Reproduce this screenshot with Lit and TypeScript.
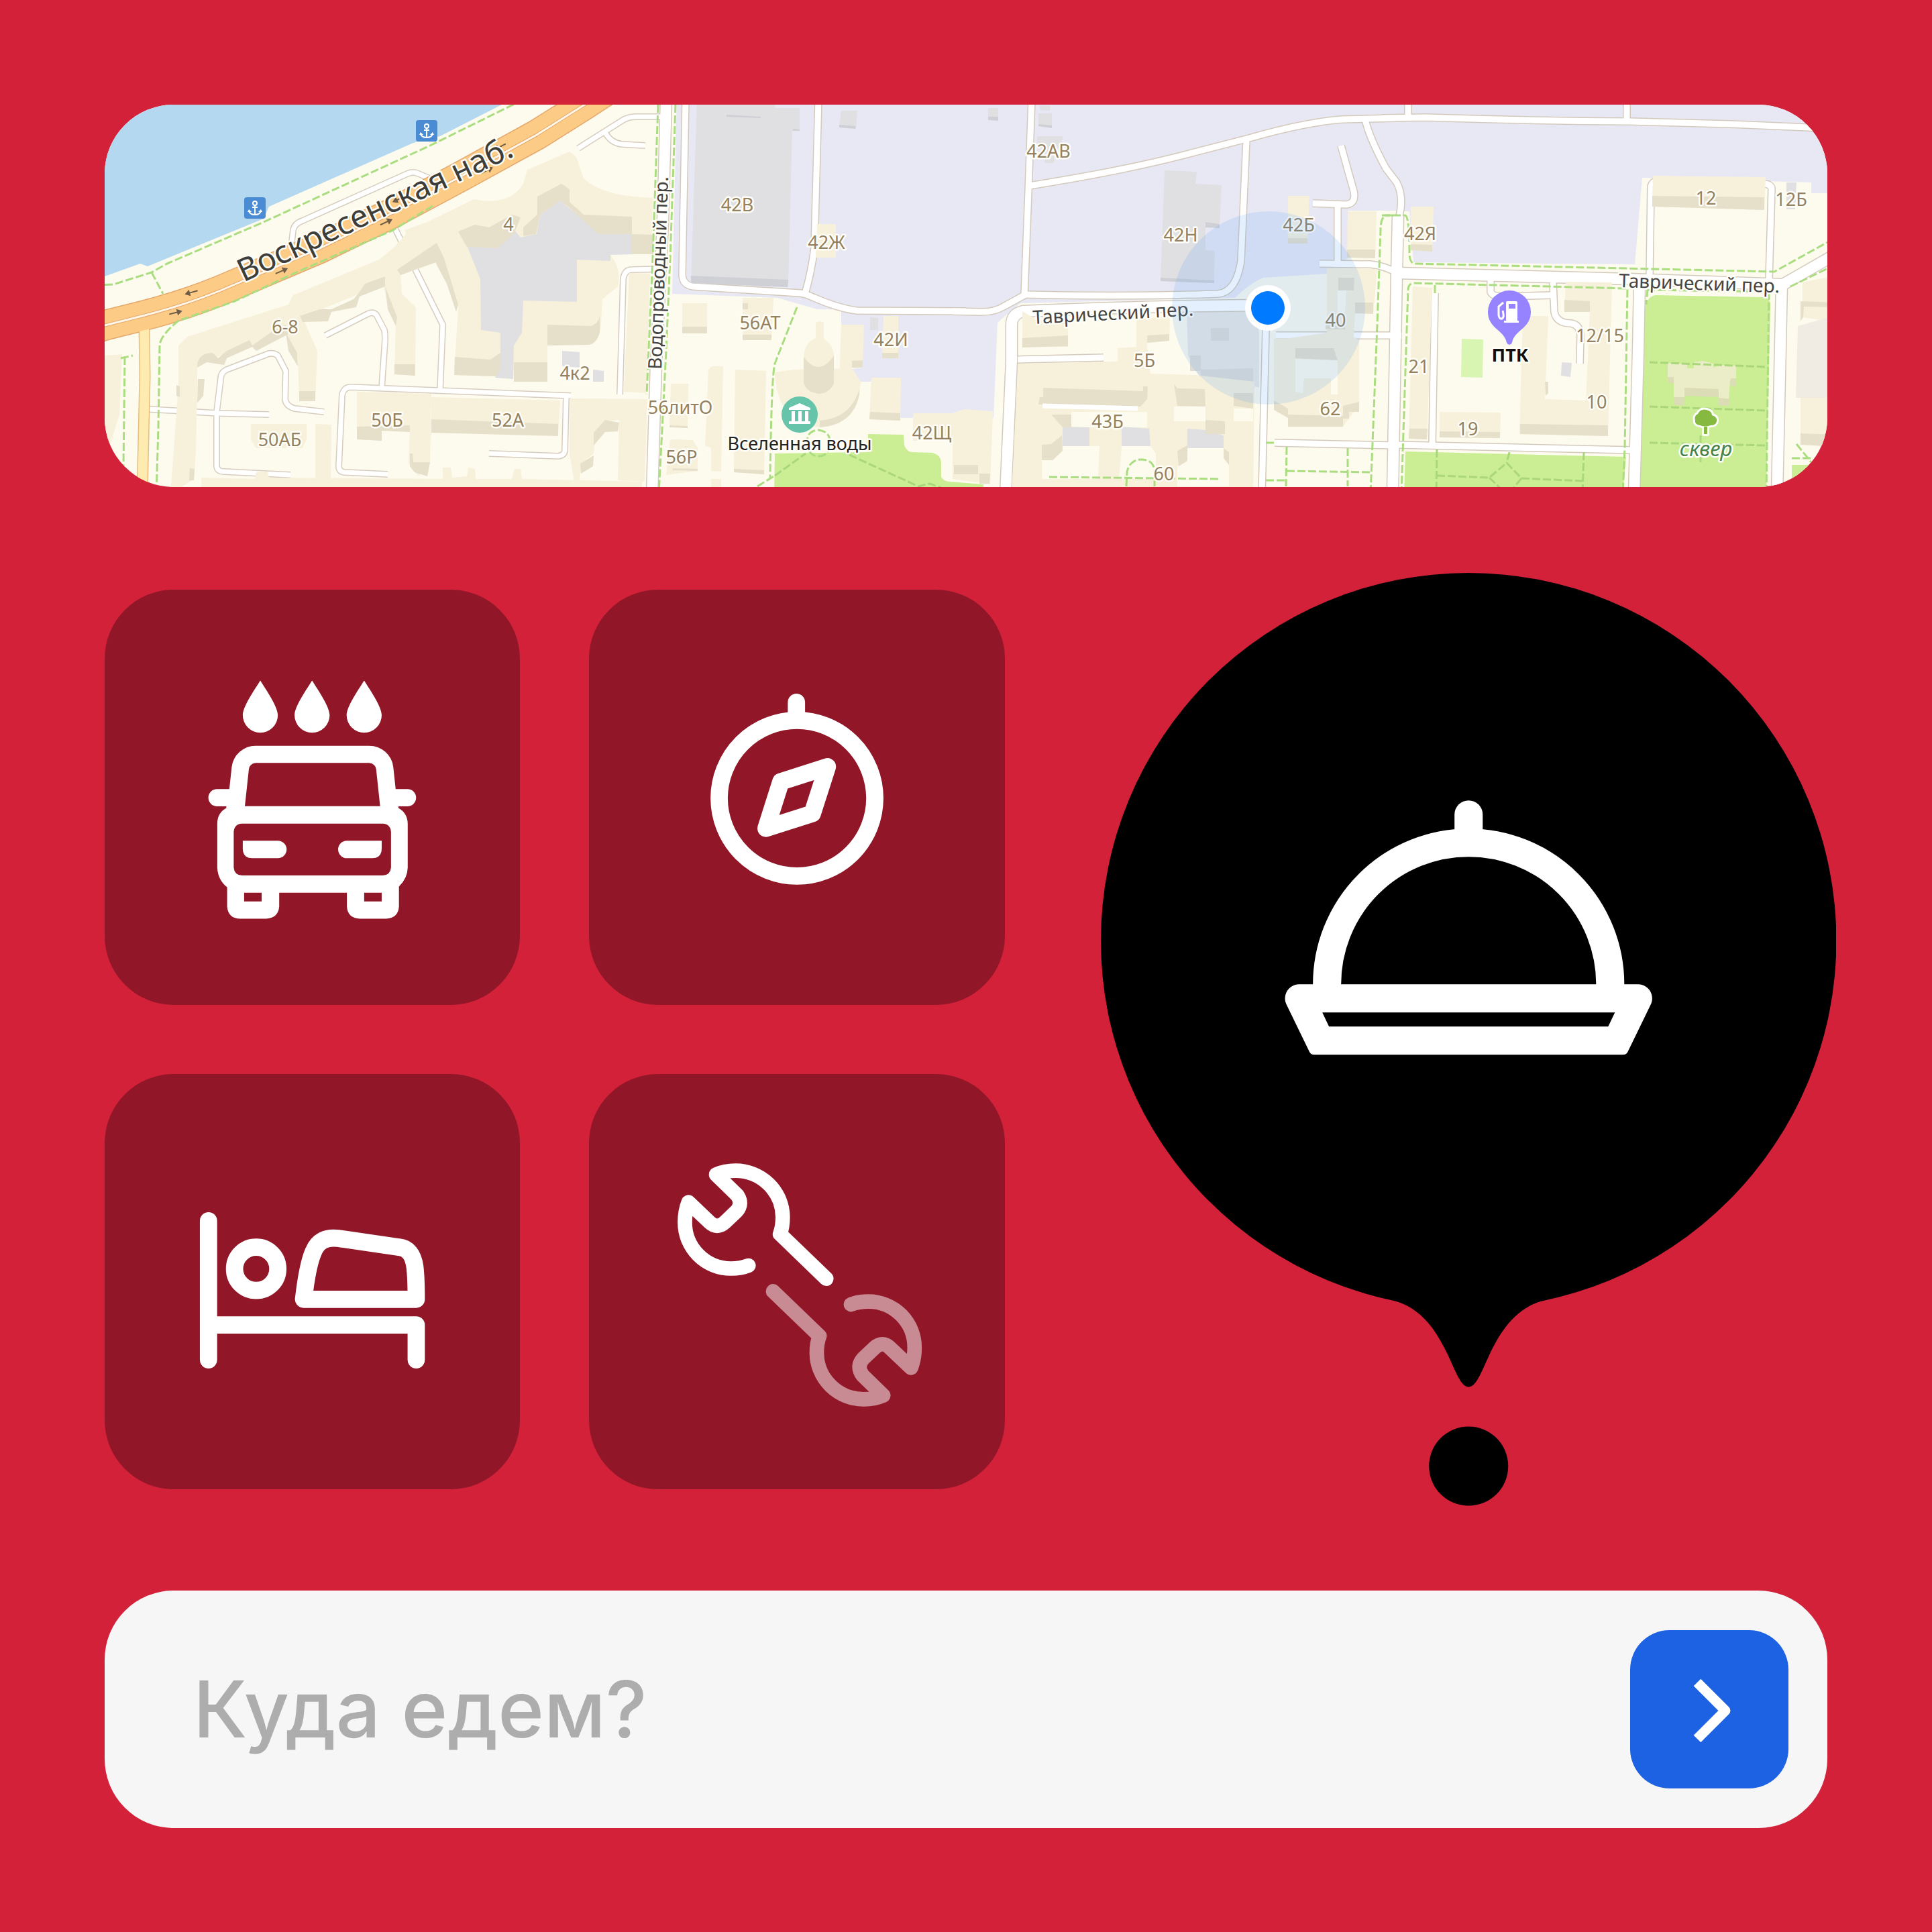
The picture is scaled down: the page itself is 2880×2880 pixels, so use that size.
import { LitElement, html, svg, css } from "lit";
import { customElement, property } from "lit/decorators.js";

/* ---------- map data ---------- */

type Plot = (d: string) => string;

/** The map is digitised in four sheets; each converts its own grid to map units. */
const sheet = (left: number, span: number) => {
  const x = (v: number) => Math.round((v * span) / 1568 + left);
  const y = (v: number) => Math.round((v * 600) / 1568 - 16);
  const plot: Plot = (d) =>
    d.replace(/(-?\d+) (-?\d+)/g, (_, a, b) => `${x(+a)} ${y(+b)}`);
  return { x, y, plot };
};

const s1 = sheet(-16, 660);
const s2 = sheet(624, 660);
const s3 = sheet(1264, 660);
const s4 = sheet(1904, 680);
const a = s1.plot;
const b = s2.plot;
const c = s3.plot;
const d = s4.plot;

const WATER = a("M0 0 L1560 0 L1445 42 L1225 165 L1130 190 L620 440 L600 485 L190 672 L165 660 L38 712 L0 725 Z");

const INDUSTRY =
  b("M545 0 L527 778 L900 795 L1040 838 L1125 838 L1125 900 L1205 1065 L1165 1072 L1195 1120 L1232 1122 L1338 1262 L1568 1262") +
  c(" L145 1262 L158 890 L240 815 L1000 795 Q1050 740 1100 715 L1325 700 L1400 640 L1400 455 L1530 455") +
  d(" L95 458 L108 655 L870 665 L895 327 L1475 345 L1475 387 L1568 387 L1568 0 Z");

const PARKS = [
  d("M903 835 Q910 790 940 785 L1310 793 Q1335 795 1336 820 L1322 1560 L888 1560 Z"),
  d("M80 1392 L840 1414 L828 1560 L75 1560 Z"),
  d("M1408 1445 L1568 1445 L1568 1560 L1408 1560 Z"),
  b("M888 1560 L890 1400 L1220 1395 L1220 1325 L1348 1328 L1350 1370 Q1360 1395 1380 1395 L1450 1398 Q1480 1405 1480 1440 L1480 1490 Q1485 1508 1510 1510 L1630 1522 L1630 1560 Z"),
];

const WIDE_ROADS = [
  b("M505 20 L495 500 L470 1050 L455 1560"),
  c("M1110 822 Q700 826 250 846 Q208 856 208 900 L208 1040 L188 1560"),
  d("M55 475 L50 700 L38 1560"),
  d("M50 698 L850 722 L1380 742 L1568 620"),
  d("M885 735 L880 1000 L868 1560"),
  d("M1375 740 L1368 1100 L1358 1560"),
];

const ROADS = [
  b("M575 20 L562 700 Q562 745 600 750 L980 775 Q1000 778 1030 795 Q1120 835 1180 843 L1568 848"),
  b("M1045 20 L1030 600 Q1020 700 997 778"),
  c("M0 848 L100 850 Q150 850 180 828 L254 783"),
  c("M280 20 L268 380 L255 783"),
  c("M270 357 Q600 300 830 235 L1050 172 Q1250 110 1380 100 L1568 95"),
  c("M254 782 Q600 792 940 780 Q1005 770 1022 650 L1040 180"),
  c("M1110 850 L1110 920 L1095 1560"),
  c("M1460 100 Q1475 170 1535 290") + d(" L50 345 Q75 400 60 475"),
  d("M0 95 L150 92 Q500 105 850 108 L1200 118 L1568 136"),
  d("M90 20 L90 92"),
  d("M842 20 L842 106"),
  c("M1363 435 L1363 660"),
  c("M1375 200 L1420 380 Q1430 425 1395 432 L1275 427"),
  c("M1300 662 L1480 665 Q1530 670 1580 700"),
  c("M1145 940 L1590 942"),
  c("M1140 1360 L1568 1370"),
  d("M50 1366 L860 1388"),
  d("M373 725 L373 770 Q380 790 410 790 L590 785"),
  d("M588 735 L592 850 Q600 895 650 895 Q680 900 682 940 L680 1050"),
  d("M183 775 L172 1366"),
  d("M920 715 L925 360 Q930 340 950 340 L1310 350 Q1340 350 1340 370 L1330 725"),
  c("M230 1034 L535 1026"),
];

const LANES = [
  a("M700 575 L705 530 Q710 505 740 495 L1110 310 Q1130 300 1150 310 L1190 328"),
  a("M820 940 L970 858 Q995 845 1005 870 L1028 920 Q1032 930 1031 960 L1020 1145"),
  a("M1062 515 L1235 900 L1225 1155"),
  a("M198 1228 L438 1243 L620 1250"),
  a("M815 1240 L710 1225 Q680 1215 678 1190 L680 1080 L650 1020 Q640 1008 620 1012 L470 1075 Q450 1085 449 1110 L435 1240 L434 1450 Q436 1470 460 1471 L697 1485"),
  a("M1040 1482 L885 1475 Q868 1470 868 1450 L880 1170 Q885 1143 910 1143 L1690 1176"),
  a("M1400 1402 L1645 1410 Q1666 1408 1667 1390 L1673 1180"),
  b("M195 212 L350 105 Q370 90 400 90 L500 88"),
  b("M290 150 Q310 190 350 195 L432 202"),
  b("M342 1172 L355 720 Q358 685 385 685 L480 683"),
];

const BUILDINGS = [
  a("M300 980 L330 945 L690 820 L705 785 L1010 645 L1060 600 L1110 540 L1220 590 L1245 640 L1215 655 L1085 705 L1090 780 L1140 830 L1138 1098 L1065 1092 L1070 880 L1030 770 L1025 740 L740 870 L790 1000 L785 1198 L728 1195 L722 1020 L680 940 L450 1020 L365 1060 L365 1150 L360 1400 L355 1500 L272 1560 L300 1140 Z"),
  a("M1100 530 L1180 500 L1345 410 Q1470 440 1520 350 L1535 295 L1685 225 L1708 245 L1735 330 Q1800 400 1980 405 L1975 620 L1830 628 Q1870 680 1855 750 L1800 800 L1795 900 Q1790 970 1740 975 L1607 980 L1607 1120 L1487 1120 L1485 1070 L1425 1100 L1275 1095 L1290 830 L1220 590 L1140 610 Z"),
  a("M38 1020 L100 1015 L90 1250 L60 1360 L20 1350 Z"),
  a("M932 1160 L1195 1168 L1190 1440 L1150 1490 L1115 1440 L1120 1310 L1020 1305 L1020 1350 L932 1345 Z"),
  a("M1195 1180 L1650 1195 L1645 1330 L1195 1320 Z"),
  a("M557 1285 L753 1285 L753 1345 L740 1380 L575 1380 L557 1345 Z"),
  a("M785 1285 L840 1288 L838 1500 L785 1500 Z"),
  a("M380 1495 L570 1500 L575 1470 L615 1470 L620 1495 L1235 1500 L1235 1455 L1265 1455 L1268 1495 L1320 1490 L1325 1455 L1350 1460 L1352 1500 L1480 1500 L1490 1460 L1510 1460 L1515 1500 L1940 1510 L1940 1560 L380 1560 Z"),
  b("M375 698 L450 700 L435 1165 L357 1160 Z"),
  b("M165 1187 L440 1190 L430 1510 L335 1505 L340 1270 L290 1275 L255 1330 L250 1400 L205 1440 L200 1510 L180 1510 L165 1400 Z"),
  b("M562 815 L650 815 L650 932 L562 932 Z"),
  b("M778 795 L885 795 L878 960 L778 960 Z"),
  b("M668 1060 L708 1062 L700 1470 L665 1468 L665 1380 L645 1370 L655 1075 Z"),
  b("M750 1075 L860 1080 L853 1482 L745 1475 Z"),
  b("M522 1130 L585 1130 L582 1302 L518 1295 Z"),
  b("M520 1345 L600 1348 L618 1380 L618 1468 L505 1485 Z"),
  b("M665 1500 L702 1500 L700 1535 L665 1535 Z"),
  b("M890 1085 L960 1075 L1165 1070 L1195 1120 L1190 1170 Q1160 1290 1050 1298 Q900 1290 890 1085 Z"),
  b("M1125 900 L1208 900 L1202 1062 L1165 1065 L1165 1120 L1120 1120 Z"),
  b("M1275 865 L1327 865 L1327 1030 L1270 1030 Z"),
  b("M1232 1105 L1338 1105 L1336 1272 L1225 1268 Z"),
  b("M1380 1245 L1535 1245 L1560 1262 L1560 1350 L1380 1350 Z"),
  b("M1525 1390 L1590 1390 L1590 1483 L1525 1483 Z"),
  b("M1040 508 L1107 508 L1107 638 L1035 638 Z"),
  c("M248 848 L300 880 L408 880 L408 985 L248 985 Z"),
  c("M650 880 L770 865 L768 962 L690 968 L690 1000 L585 1060 L585 990 L650 985 Z"),
  c("M232 1050 L590 1044 L590 1000 L690 990 L700 1090 L860 1095 L1068 1120 L1065 1560 L210 1560 Z"),
  c("M0 1245 L40 1228 L142 1235 L132 1520 L0 1500 Z"),
  c("M1187 398 L1263 398 L1257 583 L1187 583 Z"),
  c("M1400 458 L1502 458 L1497 640 L1398 638 Z"),
  c("M1325 680 L1505 682 L1490 855 L1425 855 L1420 945 L1440 960 L1440 1205 L1420 1240 L1383 1295 L1187 1295 L1187 1260 L1137 1220 L1137 955 L1195 950 L1325 930 Z"),
  d("M98 440 L177 440 L173 612 L98 610 Z"),
  d("M107 750 L172 755 L155 1345 L93 1343 Z"),
  d("M198 1238 L407 1242 L406 1340 L198 1338 Z"),
  d("M632 733 L790 735 L778 1333 L473 1325 L485 865 L572 865 L560 1190 L700 1195 L715 850 L628 850 Z"),
  d("M932 318 L1318 325 L1315 452 L930 440 Z"),
  d("M1445 735 L1568 705 L1568 890 L1445 870 Z"),
  d("M1440 1185 L1568 1185 L1568 1375 L1440 1365 Z"),
];

const SHADOWS = [
  a("M1065 1052 L1138 1052 L1138 1098 L1065 1092 Z"),
  a("M728 1158 L785 1158 L785 1198 L728 1198 Z"),
  a("M730 865 L800 840 L840 840 L920 800 L940 770 L960 740 L1030 710 L1030 750 L940 790 L930 830 L840 850 L830 885 L740 888 Z"),
  a("M365 1050 Q375 1010 420 1010 L440 1030 L470 1000 L550 960 L560 980 L640 920 L680 900 L690 935 L575 1000 L560 985 L470 1030 L460 1055 L400 1045 L365 1065 Z"),
  a("M680 930 L720 1010 L722 1060 L690 1000 Z"),
  a("M1030 750 L1075 870 L1070 905 L1040 840 Z"),
  a("M368 1110 L392 1110 L388 1175 L365 1205 Z"),
  a("M292 1135 L303 1140 L303 1180 L292 1175 Z"),
  a("M340 1458 L356 1460 L354 1505 L338 1505 Z"),
  a("M1075 685 L1215 580 L1240 640 L1290 820 L1283 850 L1250 740 L1210 655 L1085 705 Z"),
  a("M1290 535 L1350 510 L1400 520 L1480 470 L1510 480 L1490 540 L1430 600 L1320 595 Z"),
  a("M1278 1025 L1405 1035 L1440 1010 L1440 1065 L1425 1100 L1275 1095 Z"),
  a("M1487 1045 L1607 1045 L1607 1120 L1487 1120 Z"),
  a("M932 1295 L1120 1290 L1120 1318 L1020 1312 L1020 1352 L932 1346 Z"),
  a("M1118 1400 L1128 1400 L1130 1435 L1190 1435 L1180 1490 L1135 1475 L1118 1450 Z"),
  a("M1195 1268 L1645 1287 L1645 1332 L1195 1320 Z"),
  b("M50 400 L135 350 L165 370 L165 420 L215 470 L385 478 L385 545 L265 545 L160 440 L130 415 L60 470 L45 545 L0 555 L0 520 L50 470 Z"),
  b("M385 547 L460 550 L460 625 L385 625 Z"),
  b("M85 900 L240 905 Q270 890 272 860 L272 930 Q260 975 230 978 L85 980 Z"),
  b("M250 1320 L290 1270 L340 1280 L335 1315 L290 1318 L250 1370 Z"),
  b("M202 1440 L250 1408 L248 1450 L205 1480 Z"),
  b("M562 906 L650 906 L650 932 L562 932 Z"),
  b("M778 938 L878 938 L878 960 L778 960 Z"),
  b("M778 815 L796 815 L796 840 L778 840 Z"),
  b("M745 1460 L853 1465 L853 1482 L745 1475 Z"),
  b("M518 1290 L582 1293 L582 1302 L518 1299 Z"),
  b("M530 1458 L618 1460 L618 1468 L530 1466 Z"),
  b("M1190 1150 Q1160 1265 1050 1272 L1050 1298 Q1170 1290 1190 1170 Z"),
  b("M1165 1040 L1202 1038 L1202 1065 L1165 1065 Z"),
  b("M993 1020 Q1045 1105 1100 1020 L1100 1130 Q1080 1168 1045 1168 Q1000 1160 993 1125 Z"),
  b("M1270 1010 L1327 1010 L1327 1030 L1270 1030 Z"),
  b("M1228 1240 L1336 1245 L1336 1272 L1226 1268 Z"),
  b("M1525 1450 L1590 1450 L1590 1483 L1525 1483 Z"),
  c("M248 950 L408 942 L408 983 L248 988 Z"),
  c("M690 942 L768 935 L768 962 L690 970 Z"),
  c("M320 1145 L675 1158 L675 1140 L692 1140 L690 1190 L665 1218 L305 1210 L308 1180 L320 1180 Z"),
  c("M785 1130 L795 1148 L893 1150 L895 1218 L795 1215 Z"),
  c("M995 1165 L1065 1165 L1065 1225 L995 1215 Z"),
  c("M315 1368 L350 1365 L388 1330 L390 1390 L355 1428 L315 1428 Z"),
  c("M350 1250 L420 1250 L420 1298 L390 1298 Z"),
  c("M895 1270 L965 1275 L965 1325 L895 1325 Z"),
  c("M795 1390 L832 1370 L832 1430 L800 1450 Z"),
  c("M960 1380 L978 1395 L978 1445 L960 1420 Z"),
  c("M5 1445 L90 1445 L90 1482 L5 1482 Z"),
  c("M95 1480 L132 1480 L130 1518 L95 1518 Z"),
  c("M1187 563 L1257 563 L1257 583 L1187 583 Z"),
  c("M1398 605 L1497 607 L1497 640 L1398 638 Z"),
  c("M1213 990 L1350 990 L1363 1038 L1213 1030 Z"),
  c("M1187 1250 L1383 1255 L1383 1295 L1187 1295 Z"),
  c("M1137 1195 L1187 1225 L1187 1262 L1137 1230 Z"),
  c("M1383 1215 L1440 1200 L1440 1240 L1405 1240 L1405 1265 L1383 1265 Z"),
  c("M1365 715 L1422 715 L1420 765 L1365 765 Z"),
  c("M1425 812 L1490 814 L1490 857 L1425 855 Z"),
  c("M1322 895 L1390 895 L1390 918 L1322 918 Z"),
  d("M98 585 L174 587 L173 614 L98 610 Z"),
  d("M94 1303 L157 1305 L155 1345 L93 1343 Z"),
  d("M198 1315 L406 1318 L406 1340 L198 1338 Z"),
  d("M628 803 L715 808 L714 850 L628 850 Z"),
  d("M475 1285 L777 1292 L776 1333 L474 1325 Z"),
  d("M560 1120 L572 1120 L572 1165 L562 1175 Z"),
  d("M930 396 L1315 402 L1315 452 L930 440 Z"),
  d("M1440 808 L1568 812 L1568 832 L1450 828 L1448 870 L1440 885 Z"),
  d("M1440 1322 L1568 1328 L1568 1375 L1440 1367 Z"),
];

const COURTYARDS = [
  c("M315 1428 L355 1428 L390 1390 L390 1372 L520 1372 L515 1500 L315 1500 Z"),
  c("M598 1372 L700 1372 L720 1400 L720 1500 L590 1500 Z"),
  c("M832 1380 L960 1380 L978 1450 L978 1530 L795 1530 L795 1450 L832 1430 Z"),
  c("M420 1238 L690 1238 L690 1300 L420 1298 Z"),
  c("M785 1218 L895 1218 L895 1275 L785 1275 Z"),
  c("M995 1225 L1065 1225 L1065 1275 L995 1275 Z"),
  c("M1213 1032 L1363 1038 L1363 1170 L1340 1170 L1340 1108 L1245 1108 L1240 1165 L1213 1160 Z"),
  c("M1363 765 L1395 765 L1390 850 L1363 850 Z"),
];

const PALE_BLOCKS = [
  c("M830 850 L1068 850 L1085 930 L1085 1145 L1000 1120 L880 1110 L835 1020 Z"),
];

const PALE_SHADOWS = [
  c("M880 1075 L1065 1068 L1065 1120 L880 1105 Z"),
  c("M915 912 L978 912 L978 962 L915 962 Z"),
  c("M840 1018 L878 1020 L878 1080 L840 1080 Z"),
];

const GREY_BLOCKS = [
  a("M1320 590 L1420 600 L1490 530 L1510 560 L1568 545 L1580 470 L1650 415 L1735 490 L1790 545 L1905 545 L1905 625 L1830 628 L1830 650 L1710 645 L1710 810 L1520 805 L1515 930 L1487 980 L1485 1110 L1420 1105 L1440 1060 L1440 930 L1370 920 L1368 720 Z"),
  b("M615 20 L890 20 L890 55 L978 55 L978 145 L952 145 L938 750 L595 738 Z"),
  b("M1125 65 L1183 65 L1178 133 L1120 128 Z"),
  b("M138 1000 L200 1005 L200 1065 L138 1060 Z"),
  b("M247 1075 L284 1078 L284 1122 L247 1120 Z"),
  b("M1228 870 L1257 872 L1257 920 L1228 920 Z"),
  c("M750 298 L865 303 L860 350 L952 355 L945 520 L895 520 L895 610 L928 612 L926 738 L737 730 Z"),
  c("M303 75 L352 75 L352 130 L303 125 Z"),
  c("M300 165 L390 165 L388 210 L358 215 L358 270 L326 270 L326 215 L300 210 Z"),
  c("M125 55 L162 55 L162 102 L125 102 Z"),
  c("M308 45 L345 48 L345 66 L308 62 Z"),
  c("M390 1297 L485 1300 L485 1372 L390 1372 Z"),
  c("M598 1297 L695 1305 L700 1372 L598 1372 Z"),
  c("M832 1305 L895 1308 L960 1330 L960 1380 L832 1380 Z"),
  d("M1390 345 L1425 345 L1420 450 L1390 450 Z"),
  d("M617 1045 L652 1047 L648 1102 L615 1098 Z"),
];

const GREY_SHADOWS = [
  b("M595 708 L938 724 L935 752 L595 738 Z"),
  b("M720 82 L840 90 L840 95 L720 88 Z"),
  b("M955 136 L978 138 L978 145 L955 145 Z"),
  b("M1120 120 L1178 126 L1176 135 L1120 130 Z"),
  c("M737 716 L926 726 L926 738 L737 730 Z"),
  c("M895 500 L945 508 L945 522 L895 520 Z"),
  c("M125 90 L162 90 L162 104 L125 102 Z"),
  c("M303 118 L352 123 L352 132 L303 126 Z"),
];

const PATHS = [
  a("M0 745 L70 742 L205 695 L260 660 L600 500 L1190 200 L1500 35"),
  a("M205 695 L245 780"),
  a("M1200 437 L1060 530 L700 702 L500 808 L300 882 Q235 940 232 980 L228 1300 L222 1560"),
  a("M110 1025 L105 1450"),
  a("M95 1030 L138 1020"),
  b("M478 42 L458 640 L437 1170"),
  b("M540 42 L520 640 L505 1000 L480 1560"),
  b("M970 832 L890 1050 Q880 1100 874 1500"),
  b("M830 1530 L890 1486"),
  b("M1005 1370 Q1000 1312 1045 1310 Q1080 1315 1085 1345 Q1090 1410 1045 1412 Q1015 1410 1005 1370"),
  c("M342 1492 L950 1500"),
  c("M616 1530 L618 1470 Q630 1425 668 1423 Q710 1425 716 1465 L716 1530"),
  c("M1110 1358 L1140 1358"),
  c("M1110 1506 L1180 1506"),
  c("M1182 1375 L1180 1530"),
  c("M1182 1468 L1485 1473"),
  c("M1400 1380 L1400 1530"),
  c("M1560 473 L1535 473 Q1515 480 1515 530 L1505 900 L1480 1560"),
  d("M0 473 L80 473 Q95 480 94 620 Q95 655 110 660 L1350 693 L1560 560"),
  d("M68 1560 L90 760 Q92 738 110 738 L845 757 L835 1380 L828 1560"),
  d("M183 745 L183 775"),
  d("M912 760 L908 820"),
  d("M1560 665 L1395 755"),
  d("M1330 770 L1322 1560"),
  d("M910 762 L1330 772"),
  d("M1408 1418 L1480 1420"),
  d("M1425 1365 L1475 1435"),
];

const PARK_PATHS = [
  b("M890 1486 L1000 1400"),
  b("M1155 1405 L1400 1530 L1440 1518 L1480 1535"),
  d("M188 1385 L186 1560"),
  d("M695 1395 L690 1560"),
  d("M188 1487 L370 1495 L430 1438 L480 1498 L690 1507"),
  d("M437 1395 L430 1438"),
  d("M370 1495 L415 1545"),
  d("M480 1498 L445 1545"),
  d("M920 1045 L1325 1063"),
  d("M920 1217 L1320 1234"),
  d("M920 1358 L1320 1370"),
  d("M1095 1330 L1095 1435"),
];

type House = [number, number, string];
const houses = (s: typeof s1, list: House[]): House[] =>
  list.map(([x, y, t]) => [s.x(x), s.y(y), t]);

const HOUSES: House[] = [
  ...houses(s1, [
    [1468, 532, "4"],
    [676, 932, "6-8"],
    [658, 1372, "50АБ"],
    [1038, 1297, "50Б"],
    [1467, 1297, "52А"],
  ]),
  ...houses(s2, [
    [758, 458, "42В"],
    [1073, 604, "42Ж"],
    [838, 918, "56АТ"],
    [1303, 983, "42И"],
    [182, 1113, "4к2"],
    [555, 1246, "56литО"],
    [1447, 1347, "42Щ"],
    [560, 1440, "56Р"],
  ]),
  ...houses(s3, [
    [340, 248, "42АВ"],
    [807, 576, "42Н"],
    [1225, 535, "42Б"],
    [1357, 906, "40"],
    [679, 1064, "5Б"],
    [548, 1302, "43Б"],
    [1337, 1253, "62"],
    [749, 1505, "60"],
  ]),
  ...houses(s4, [
    [1113, 430, "12"],
    [1407, 436, "12Б"],
    [132, 570, "42Я"],
    [750, 967, "12/15"],
    [126, 1086, "21"],
    [738, 1225, "10"],
    [294, 1330, "19"],
  ]),
];

/** One-way arrows on the embankment: x, y, angle. */
const ARROWS = [
  [129, 280, 164],
  [106, 310, -14],
  [264, 248, -23],
  [420, 175, -25],
  [438, 141, 155],
  [570, 98, -28],
  [589, 63, 152],
];

const EMBANKMENT = a("M0 915 L38 902 L170 865 Q350 815 500 742 L800 600 L1060 462 L1300 322 L1568 160 L1735 45 L1850 -40");
const YELLOW_STREET = a("M178 905 L181 1100 L172 1560");

@customElement("city-map")
class CityMap extends LitElement {
  static styles = css`
    :host {
      display: block;
      overflow: hidden;
      border-radius: 103px;
      background: #fdfbee;
    }
    svg {
      display: block;
      width: 100%;
      height: auto;
      font-family: "Noto Sans", "Open Sans", sans-serif;
    }
    .water { fill: #b4d8f0; }
    .industry { fill: #e8e8f4; }
    .park { fill: #cbee95; }
    .pitch { fill: #d9f5b2; }
    .block { fill: #f7f0da; }
    .shade { fill: #e6dfca; }
    .pale { fill: #e9e8e4; }
    .pale-shade { fill: #dddcd6; }
    .grey { fill: #e0e0e3; }
    .grey-shade { fill: #cfd0d5; }
    .yard { fill: #fdfbee; }
    .line { fill: none; stroke-linejoin: round; }
    .edge-wide { stroke: #d3cabc; stroke-width: 19px; }
    .face-wide { stroke: #fff; stroke-width: 16px; }
    .edge { stroke: #d3cabc; stroke-width: 12px; }
    .face { stroke: #fff; stroke-width: 9px; }
    .edge-lane { stroke: #d6cdbf; stroke-width: 10px; }
    .face-lane { stroke: #fff; stroke-width: 7px; }
    .quay-edge { stroke: #e5a86c; stroke-width: 46px; }
    .quay { stroke: #fccb86; stroke-width: 43px; }
    .median-edge { stroke: #e5a86c; stroke-width: 5px; }
    .median { stroke: #fff8ea; stroke-width: 3px; }
    .yellow-edge { stroke: #e8bd80; stroke-width: 17px; }
    .yellow { stroke: #feebb0; stroke-width: 14px; }
    .path { stroke: #aadd80; stroke-width: 3px; stroke-dasharray: 12 4; }
    .park-path { stroke: #aad67c; stroke-width: 3px; stroke-dasharray: 12 4; }
    .arrow { fill: none; stroke: #6d5d48; stroke-width: 2px; }
    .arrow-head { fill: #6d5d48; }
    text {
      paint-order: stroke;
      stroke: #fffef8;
      stroke-width: 5px;
      stroke-linejoin: round;
    }
    .house { fill: #93815f; font-size: 27px; text-anchor: middle; }
    .street { fill: #444; font-size: 28px; }
    .quay-name { fill: #3d3d3a; font-size: 47px; }
    .place { fill: #222; font-size: 27px; text-anchor: middle; }
    .fuel-name { fill: #111; font-size: 27px; font-weight: 700; text-anchor: middle; }
    .square-name { fill: #45844a; font-size: 31px; font-style: italic; text-anchor: middle; }
    .tree { fill: #85b940; stroke: #fff; stroke-width: 6px; stroke-linejoin: round; paint-order: stroke; }
  `;

  private lines(list: string[], name: string) {
    return list.map((p) => svg`<path class="line ${name}" d=${p}></path>`);
  }

  private areas(list: string[], name: string) {
    return list.map((p) => svg`<path class=${name} d=${p}></path>`);
  }

  private anchor(x: number, y: number) {
    return svg`<g transform="translate(${x} ${y})">
      <rect width="32" height="32" rx="4" fill="#4a8bd4"></rect>
      <g fill="none" stroke="#fff" stroke-width="2">
        <circle cx="16" cy="9" r="3"></circle>
        <path d="M16 12 V26 M12 15 H20 M7 20 Q8 26 16 26 Q24 26 25 20"></path>
      </g>
      <path fill="#fff" d="M5 22 L7 18 L11 22 Z M27 22 L25 18 L21 22 Z"></path>
    </g>`;
  }

  render() {
    return html`<svg viewBox="0 0 2568 570" role="img" aria-label="Карта">
      <path class="water" d=${WATER}></path>
      <path class="industry" d=${INDUSTRY}></path>
      ${this.areas(PARKS, "park")}
      <path class="pitch" d=${d("M275 955 L348 957 L346 1105 L273 1103 Z")}></path>
      ${this.areas(PALE_BLOCKS, "pale")} ${this.areas(PALE_SHADOWS, "pale-shade")}
      ${this.lines(LANES, "edge-lane")} ${this.lines(ROADS, "edge")}
      ${this.lines(WIDE_ROADS, "edge-wide")} ${this.lines(LANES, "face-lane")}
      ${this.lines(ROADS, "face")} ${this.lines(WIDE_ROADS, "face-wide")}
      ${this.lines([YELLOW_STREET], "yellow-edge")}
      ${this.lines([EMBANKMENT], "quay-edge")}
      ${this.lines([YELLOW_STREET], "yellow")}
      ${this.lines([EMBANKMENT], "quay")}
      ${this.lines([EMBANKMENT], "median-edge")}
      ${this.lines([EMBANKMENT], "median")}
      ${this.areas(BUILDINGS, "block")} ${this.areas(COURTYARDS, "yard")}
      ${this.areas(GREY_BLOCKS, "grey")} ${this.areas(SHADOWS, "shade")}
      ${this.areas(GREY_SHADOWS, "grey-shade")}
      <path class="block" d=${b("M1035 890 L1050 885 L1065 890 L1065 955 Q1100 980 1100 1020 Q1045 1105 993 1025 Q995 970 1035 950 Z")}></path>
      <path fill="#f0ece3" d=${d("M1430 905 L1568 860 L1568 1185 L1422 1185 Z")}></path>
      <path fill="#ebecc8" d=${d("M983 1048 L1050 1052 L1050 1068 L1072 1068 L1072 1045 L1102 1040 L1140 1050 L1140 1065 L1165 1055 L1218 1058 L1217 1110 L1197 1115 L1192 1190 L1157 1185 L1157 1150 L1040 1148 L1040 1185 L1003 1180 L1003 1110 L983 1105 Z")}></path>
      <path fill="#dcdcb6" d=${d("M1040 1144 L1157 1150 L1157 1182 L1040 1175 Z M1003 1180 L1040 1182 L1038 1214 L1003 1210 Z M1157 1185 L1195 1188 L1193 1216 L1157 1213 Z M983 1103 L1003 1103 L1003 1130 L985 1125 Z M1198 1108 L1217 1108 L1217 1140 L1198 1138 Z")}></path>
      ${this.lines([c("M318 1215 L655 1225")], "face-lane")}
      ${this.lines(PATHS, "path")} ${this.lines(PARK_PATHS, "park-path")}
      ${ARROWS.map(
        ([x, y, r]) => svg`<g transform="translate(${x} ${y}) rotate(${r})">
          <path class="arrow" d="M-10 0 H6"></path>
          <path class="arrow-head" d="M2 -5 L10 0 L2 5 Z"></path>
        </g>`,
      )}
      ${this.anchor(208, 138)} ${this.anchor(464, 23)}

      ${HOUSES.map(([x, y, t]) => svg`<text class="house" x=${x} y=${y}>${t}</text>`)}
      <text class="quay-name" transform="translate(207 265) rotate(-25)">Воскресенская наб.</text>
      <text class="street" transform="translate(830 395) rotate(-88)">Водопроводный пер.</text>
      <text class="street" transform="translate(1384 327) rotate(-3)">Таврический пер.</text>
      <text class="street" transform="translate(2257 272) rotate(2)">Таврический пер.</text>
      <text class="place" x="1036" y="515">Вселенная воды</text>
      <text class="fuel-name" x="2095" y="383">ПТК</text>
      <text class="square-name" x="2387" y="524">сквер</text>

      <circle cx="1036" cy="462" r="27" fill="#66c4ab"></circle>
      <path
        fill="#fff"
        d="M1036 445 L1052 452 V455 H1020 V452 Z M1024 457 H1029 V472 H1024 Z M1034 457 H1039 V472 H1034 Z M1044 457 H1049 V472 H1044 Z M1020 472 H1052 V476 H1020 Z"
      ></path>

      <path
        fill="#9583ff"
        d="M2094 277 A32 32 0 0 1 2126 309 C2126 334 2101 336 2098 355 Q2094 361 2090 355 C2087 336 2062 334 2062 309 A32 32 0 0 1 2094 277 Z"
      ></path>
      <path fill="#fff" fill-rule="evenodd" d="M2089 295 Q2089 293 2091 293 H2104 Q2106 293 2106 295 V322 H2108 V325 H2086 V322 H2089 Z M2093 297 V304 H2103 V297 Z"></path>
      <path fill="none" stroke="#fff" stroke-width="3" d="M2085 295 L2078 301 V314 Q2079 320 2083 319 Q2086 317 2085 312 L2084 307"></path>

      <path
        class="tree"
        d="M2378 478 Q2370 477 2371 471 Q2369 464 2375 461 Q2379 453 2388 455 Q2396 457 2396 463 Q2404 465 2403 472 Q2402 478 2394 478 Q2386 481 2378 478 Z M2384 480 H2389 V491 H2384 Z"
      ></path>

      <circle cx="1735" cy="303" r="144" fill="#4a9cf5" fill-opacity=".15"></circle>
      <circle cx="1734" cy="303" r="34" fill="#fff"></circle>
      <circle cx="1734" cy="303" r="25" fill="#007aff"></circle>
    </svg>`;
  }
}

/* ---------- category icons ---------- */

const DROP = "M583 353 C600 380 647 447 647 479 A64 64 0 0 1 519 479 C519 447 566 380 583 353 Z";
const WRENCH =
  "M602 726 Q575 737 538 737 A168 168 0 0 1 370 567 Q370 528 383 495 L460 568 Q487 594 516 568 L558 528 Q583 500 560 468 L484 394 Q515 380 555 380 A172 170 0 0 1 727 549 Q727 585 717 611 L886 774";

const ICONS = {
  wash: {
    box: "15 21 1516 1516",
    art: svg`
      <path d=${DROP}></path>
      <path d=${DROP} transform="translate(189)"></path>
      <path d=${DROP} transform="translate(379)"></path>
      <path class="stroke" d="M493 830 L510 672 A57 57 0 0 1 566 622 H980 A57 57 0 0 1 1037 672 L1054 830"></path>
      <path class="stroke" d="M425 780 H480 M1066 780 H1120"></path>
      <path fill-rule="evenodd" d="M459 811 V818 Q426 836 426 875 V1035 Q428 1080 462 1107 V1178 Q466 1222 510 1222 H604 Q648 1220 652 1178 V1127 H899 V1178 Q902 1220 946 1222 H1042 Q1086 1220 1089 1178 V1104 Q1120 1075 1121 1035 V875 Q1120 836 1087 818 V811 Z M516 875 H1030 Q1058 877 1060 905 V1035 Q1058 1062 1030 1064 H516 Q488 1062 486 1035 V905 Q488 877 516 875 Z M524 1127 H588 V1159 H524 Z M962 1127 H1026 V1159 H962 Z"></path>
      <path d="M519 937 H647 A32 32 0 0 1 647 1001 H553 Q519 1001 519 965 Z M1026 937 H899 A32 32 0 0 0 899 1001 H992 Q1026 1001 1026 965 Z"></path>`,
  },
  explore: {
    box: "20 21 1516 1516",
    art: svg`
      <circle class="stroke" cx="779" cy="782" r="284"></circle>
      <path class="stroke" d="M777 432 V490"></path>
      <path class="stroke" d="M890 667 L835 838 L666 892 L720 722 Z"></path>`,
  },
  hotel: {
    box: "15 27 1516 1516",
    art: svg`
      <path class="stroke" d="M394 563 V1070 M394 943 H1152 V1070"></path>
      <circle class="stroke" cx="568" cy="738" r="79"></circle>
      <path class="stroke" d="M741 849 H1152 C1152 790 1152 770 1147 730 Q1138 664 1090 659 L868 627 Q800 618 777 675 Q755 725 741 849 Z"></path>`,
  },
  repair: {
    box: "20 27 1516 1516",
    art: svg`
      <path class="stroke thin" d=${WRENCH}></path>
      <path class="stroke thin faded" d=${WRENCH} transform="rotate(180 789 797)"></path>`,
  },
};

@customElement("category-tile")
class CategoryTile extends LitElement {
  @property() icon: keyof typeof ICONS = "wash";
  @property() name = "";

  static styles = css`
    :host {
      display: block;
      min-width: 0;
    }
    .tile {
      display: block;
      width: 100%;
      padding: 0;
      border: 0;
      border-radius: 103px;
      background: #911728;
      cursor: pointer;
    }
    svg {
      display: block;
      width: 100%;
      fill: #fff;
    }
    .stroke {
      fill: none;
      stroke: #fff;
      stroke-width: 63px;
      stroke-linecap: round;
      stroke-linejoin: round;
    }
    .thin { stroke-width: 53px; }
    .faded { opacity: 0.5; }
  `;

  render() {
    const { box, art } = ICONS[this.icon];
    return html`<button class="tile" type="button" aria-label=${this.name}>
      <svg viewBox=${box} aria-hidden="true">${art}</svg>
    </button>`;
  }
}

@customElement("app-root")
class AppRoot extends LitElement {
  static styles = css`
    :host {
      display: block;
      min-height: 100vh;
      box-sizing: border-box;
      padding: 156px;
      background: #d3213a;
    }
    .page {
      display: flex;
      flex-direction: column;
      gap: 126px;
    }
    .choices {
      display: grid;
      grid-template-columns: minmax(0, 1341fr) minmax(0, 1096fr);
      column-gap: 143px;
      align-items: center;
      padding-top: 2px;
      margin-right: -13px;
    }
    .tiles {
      display: grid;
      grid-template-columns: repeat(2, minmax(0, 1fr));
      gap: 103px;
    }
    .pin {
      display: block;
      width: 100%;
      padding: 0;
      border: 0;
      background: none;
      cursor: pointer;
    }
    .pin svg {
      display: block;
      width: 100%;
    }
    .search {
      display: flex;
      align-items: center;
      gap: 40px;
      padding: 59px 58px 59px 132px;
      border-radius: 103px;
      background: #f6f6f6;
    }
    .field {
      flex: 1;
      min-width: 0;
      height: 160px;
      padding: 0;
      border: 0;
      outline: 0;
      background: none;
      color: #333;
      font-family: Inter, "Liberation Sans", sans-serif;
      font-size: 117px;
      font-weight: 500;
    }
    .field::placeholder {
      color: #adadad;
      opacity: 1;
    }
    .go {
      flex: none;
      width: 236px;
      height: 236px;
      padding: 0;
      border: 0;
      border-radius: 59px;
      background: #1d62e2;
      cursor: pointer;
    }
    .go svg {
      display: block;
    }
  `;

  render() {
    return html`<main class="page">
      <city-map></city-map>
      <div class="choices">
        <div class="tiles">
          <category-tile icon="wash" name="Автомойка"></category-tile>
          <category-tile icon="explore" name="Прогулка"></category-tile>
          <category-tile icon="hotel" name="Отель"></category-tile>
          <category-tile icon="repair" name="Автосервис"></category-tile>
        </div>
        <button class="pin" type="button" aria-label="Ресторан">
          <svg viewBox="0 0 1096 1390" aria-hidden="true">
            <circle cx="548" cy="548" r="548"></circle>
            <path d="M380 1060 L432 1083 C480 1094 502 1134 517 1165 C530 1193 537 1213 548 1213 C559 1213 566 1193 579 1165 C594 1134 616 1094 664 1083 L716 1060 Z"></path>
            <path d="M380 1069 L432 1083 L664 1083 L716 1069 Z"></path>
            <circle cx="548" cy="1331" r="59"></circle>
            <g fill="none" stroke="#fff" stroke-width="42">
              <path stroke-linecap="round" d="M548 360 V390"></path>
              <path d="M337 625 V613 A211 211 0 0 1 759 613 V625"></path>
            </g>
            <path
              fill="#fff"
              fill-rule="evenodd"
              d="M295 613 H801 A21 21 0 0 1 819 644 L785 714 Q783 718 778 718 H318 Q313 718 311 714 L277 644 A21 21 0 0 1 295 613 Z M330 655 L340 676 H756 L766 655 Z"
            ></path>
          </svg>
        </button>
      </div>
      <form class="search" @submit=${(e: Event) => e.preventDefault()}>
        <input class="field" type="text" aria-label="Куда едем?" placeholder="Куда едем?" />
        <button class="go" type="submit" aria-label="Поехали">
          <svg viewBox="0 0 236 236" aria-hidden="true">
            <path fill="none" stroke="#fff" stroke-width="15" stroke-linejoin="round" d="M100 78 L142 120 L100 162"></path>
          </svg>
        </button>
      </form>
    </main>`;
  }
}
